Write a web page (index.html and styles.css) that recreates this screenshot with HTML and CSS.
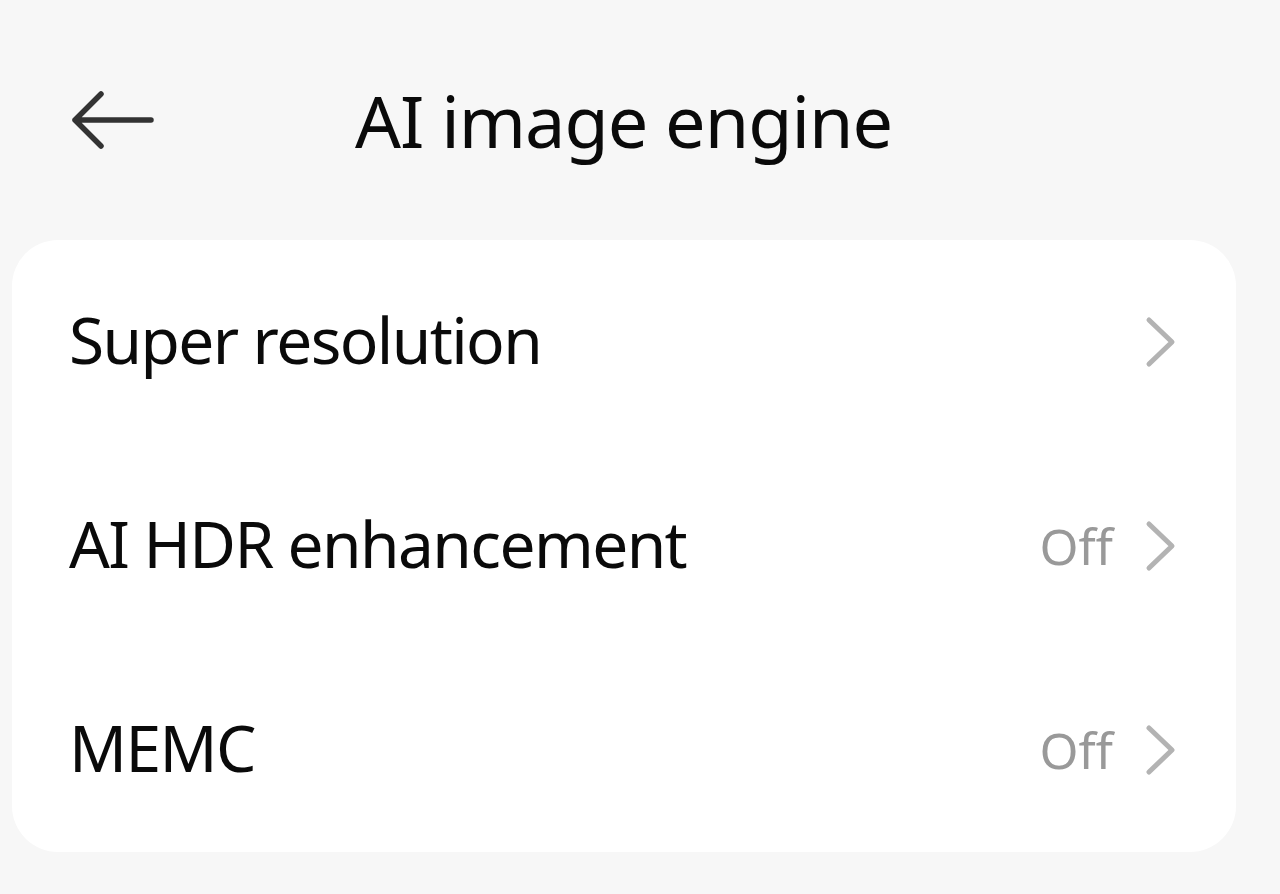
FILE: index.html
```html
<!DOCTYPE html>
<html>
<head>
<meta charset="utf-8">
<link rel="stylesheet" href="styles.css">
</head>
<body>
<div class="page">
  <header class="header">
    <div class="back">
      <svg width="84" height="60" viewBox="0 0 84 60"><path d="M30 5 L4 31 L30 57 M4 31 L80 31" fill="none" stroke="#333" stroke-width="5.5" stroke-linecap="round" stroke-linejoin="round"/></svg>
    </div>
    <h1 class="title">AI image engine</h1>
  </header>
  <div class="card">
    <div class="row">
      <span class="label">Super resolution</span>
      <span class="right"><svg class="chev" width="32" height="52" viewBox="0 0 32 52"><path d="M4 4 L27 26 L4 48" fill="none" stroke="#b3b3b3" stroke-width="5" stroke-linecap="round" stroke-linejoin="round"/></svg></span>
    </div>
    <div class="row">
      <span class="label">AI HDR enhancement</span>
      <span class="right"><span class="value">Off</span><svg class="chev" width="32" height="52" viewBox="0 0 32 52"><path d="M4 4 L27 26 L4 48" fill="none" stroke="#b3b3b3" stroke-width="5" stroke-linecap="round" stroke-linejoin="round"/></svg></span>
    </div>
    <div class="row">
      <span class="label">MEMC</span>
      <span class="right"><span class="value">Off</span><svg class="chev" width="32" height="52" viewBox="0 0 32 52"><path d="M4 4 L27 26 L4 48" fill="none" stroke="#b3b3b3" stroke-width="5" stroke-linecap="round" stroke-linejoin="round"/></svg></span>
    </div>
  </div>
</div>
</body>
</html>
```
FILE: styles.css
```css
html, body {
  margin: 0;
  padding: 0;
  background: #f7f7f7;
}
body {
  font-family: "Noto Sans", "Open Sans", sans-serif;
  width: 1280px;
  height: 894px;
  overflow: hidden;
}
.page {
  padding: 0 44px 0 12px;
}
.header {
  height: 240px;
  display: flex;
  align-items: center;
  box-sizing: border-box;
}
.back {
  width: 84px;
  height: 60px;
  margin-left: 59px;
  margin-top: -2px;
  display: flex;
}
.title {
  margin: 0 0 0 200px;
  font-size: 72px;
  font-weight: 400;
  color: #0a0a0a;
  letter-spacing: -1px;
  line-height: 1;
}
.card {
  background: #fff;
  border-radius: 46px;
  display: flex;
  flex-direction: column;
}
.row {
  height: 204px;
  display: flex;
  align-items: center;
  justify-content: space-between;
  padding: 0 59px 0 57px;
}
.label {
  font-size: 64px;
  color: #0a0a0a;
  letter-spacing: -1.6px;
  line-height: 1;
  margin-top: -4px;
}
.right {
  display: flex;
  align-items: center;
  gap: 32px;
}
.value {
  font-size: 50px;
  color: #999;
  line-height: 1;
}
.chev {
  display: block;
}
```
